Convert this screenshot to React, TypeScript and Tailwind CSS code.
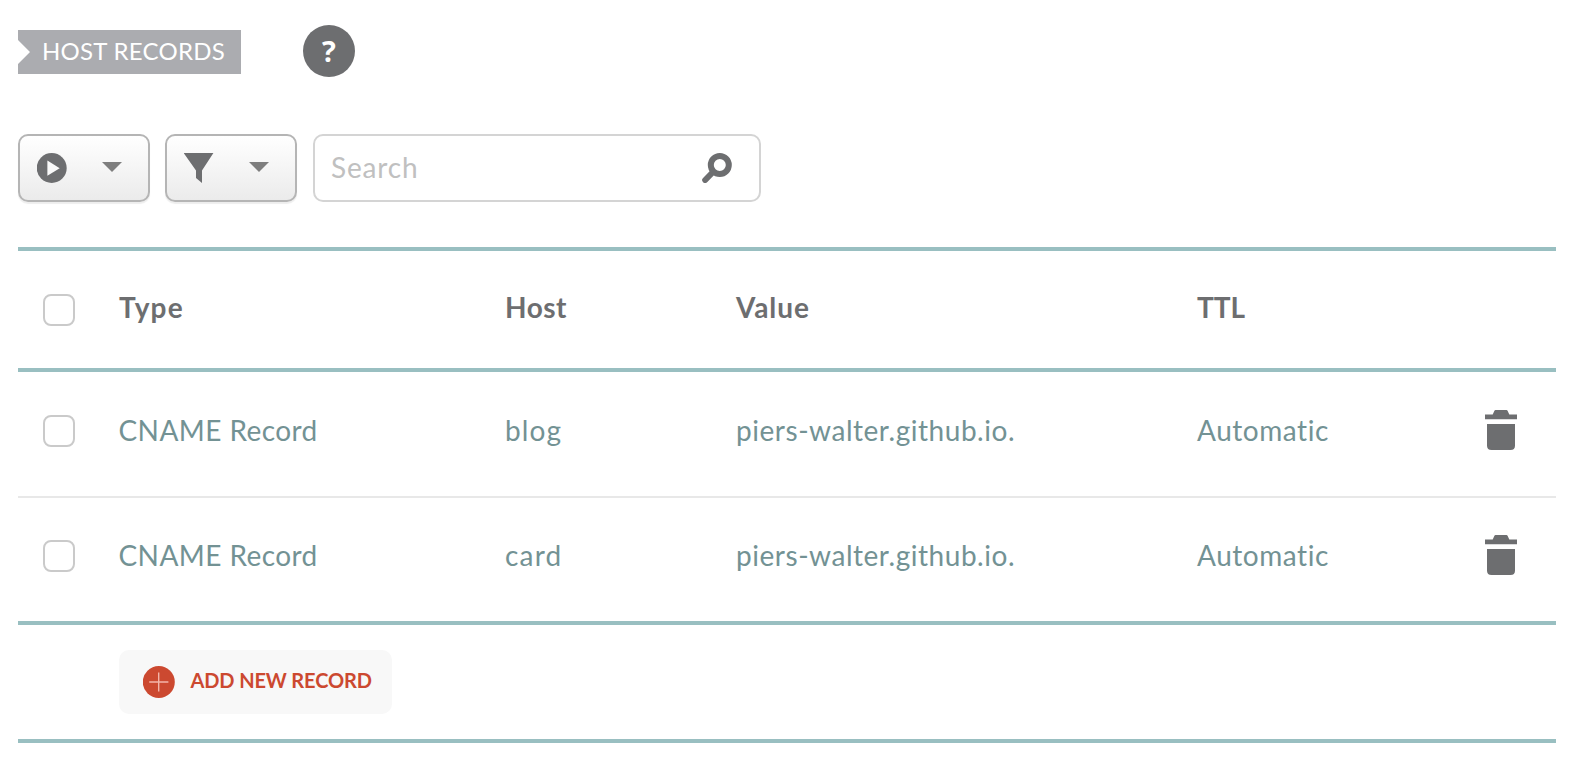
const records = [
  { host: "blog", value: "piers-walter.github.io.", ttl: "Automatic", hostSpacing: "tracking-[1.1px]" },
  { host: "card", value: "piers-walter.github.io.", ttl: "Automatic", hostSpacing: "tracking-[1.2px]" },
];

function Caret() {
  return (
    <svg className="h-[10px] w-[20px]" viewBox="0 0 20 10" fill="#7e7e7e">
      <path d="M0 0H20L10 10Z" />
    </svg>
  );
}

function Checkbox() {
  return <span className="block size-8 rounded-[8px] border-2 border-[#cacaca] bg-white" />;
}

function Trash() {
  return (
    <svg className="h-10 w-8" viewBox="0 0 32 40" fill="#6d6e70">
      <path d="M10.5 0H21.5Q22.3 0 22.7 1L24.3 4.4H32V9.2H0V4.4H7.7L9.3 1Q9.7 0 10.5 0Z" />
      <path d="M2 14H30V35.5Q30 40 25.5 40H6.5Q2 40 2 35.5Z" />
    </svg>
  );
}

const button =
  "flex h-[68px] w-[132px] items-start rounded-[10px] border-2 border-[#b5b5b5] bg-gradient-to-b from-white to-[#ebebeb] pt-[17px] shadow-[0_2px_1px_rgba(0,0,0,0.07)]";
const columns = "grid grid-cols-[100px_387px_231px_460px_289px_71px]";

export default function App() {
  return (
    <main className="h-[780px] w-[1586px] overflow-hidden bg-white pl-[18px] font-['Lato','Open_Sans',sans-serif] text-[28px] leading-8">
      <header className="flex items-center pt-[25px]">
        <h1 className="mt-[2px] flex h-11 w-[223px] items-center bg-[#abacb0] pb-[2px] pl-[24px] text-[24px] font-normal tracking-[0.27px] whitespace-nowrap text-white [clip-path:polygon(0_0,100%_0,100%_100%,0_100%,0_34px,12px_22px,0_10px)]">
          HOST RECORDS
        </h1>
        <span className="ml-[62px] flex size-[52px] items-center justify-center rounded-full bg-[#6d6e70] font-['Open_Sans',sans-serif] text-[29px] font-bold text-white">
          ?
        </span>
      </header>

      <div className="mt-[57px] flex">
        <button className={button}>
          <svg className="ml-[17px] size-[30px]" viewBox="0 0 30 30">
            <circle cx="14.7" cy="15" r="15" fill="#6d6e70" />
            <path d="M10.4 7.6V22.8L22.7 15.2Z" fill="#f9f9f9" />
          </svg>
          <span className="mt-[9px] ml-[35px]"><Caret /></span>
        </button>
        <button className={button + " ml-[15px]"}>
          <svg className="ml-[17px] size-[30px]" viewBox="0 0 30 30" fill="#6d6e70">
            <path d="M-0.3 0H29.4L18 17.5V30L12 25V17.5Z" />
          </svg>
          <span className="mt-[9px] ml-[35px]"><Caret /></span>
        </button>
        <div className="ml-4 flex h-[68px] w-[448px] items-start justify-between rounded-[10px] border-2 border-[#d4d4d4] pr-[27px] pl-4">
          <span className="mt-[15px] tracking-[0.85px] text-[#c0c0c0]">Search</span>
          <svg className="mt-[17px] size-[30px]" viewBox="0 0 30 30" fill="none" stroke="#6d6e70">
            <circle cx="17.8" cy="12" r="9" strokeWidth="6" />
            <path d="M11 19L3.2 27" strokeWidth="6" strokeLinecap="round" />
          </svg>
        </div>
      </div>

      <section className="mt-[45px] w-[1538px] border-y-4 border-[#99bfc1]">
        <div className={columns + " h-[121px] border-b-4 border-[#99bfc1] font-bold text-[#6d6e70]"}>
          <span className="pt-[43px] pl-[25px]"><Checkbox /></span>
          <span className="pt-[40px] pl-px tracking-[1.2px]">Type</span>
          <span className="pt-[40px] tracking-[0.5px]">Host</span>
          <span className="pt-[40px] tracking-[0.9px]">Value</span>
          <span className="pt-[40px] pl-px">TTL</span>
        </div>
        {records.map((r, i) => (
          <div
            key={r.host}
            className={columns + " text-[#739294] " + (i === 0 ? "h-[126px] border-b-2 border-[#e8e8e8]" : "h-[127px] border-b-4 border-[#99bfc1] [&>p]:pt-[41px]")}
          >
            <span className={i === 0 ? "pt-[43px] pl-[25px]" : "pt-[42px] pl-[25px]"}><Checkbox /></span>
            <p className="pt-[42px] pl-[0.5px] tracking-[0.42px]">CNAME Record</p>
            <p className={"pt-[42px] " + r.hostSpacing}>{r.host}</p>
            <p className="pt-[42px] tracking-[0.54px]">{r.value}</p>
            <p className="pt-[42px] pl-px tracking-[0.55px]">{r.ttl}</p>
            <span className={i === 0 ? "pt-[38px]" : "pt-[37px]"}><Trash /></span>
          </div>
        ))}
        <div className="flex h-[114px] items-center pl-[101px]">
          <button className="flex h-16 w-[273px] items-center rounded-[10px] bg-[#f8f8f8] pl-6 text-[20px] font-bold text-[#cc4930]">
            <svg className="-mt-px size-8" viewBox="0 0 32 32">
              <circle cx="15.8" cy="16" r="16" fill="#cc4930" />
              <path d="M15.7 6.4V25.6M6.2 16H25.4" stroke="#f3b5a9" strokeWidth="1.4" />
            </svg>
            <span className="-mt-[5px] ml-[15.5px] tracking-[-0.12px]">ADD NEW RECORD</span>
          </button>
        </div>
      </section>
    </main>
  );
}
